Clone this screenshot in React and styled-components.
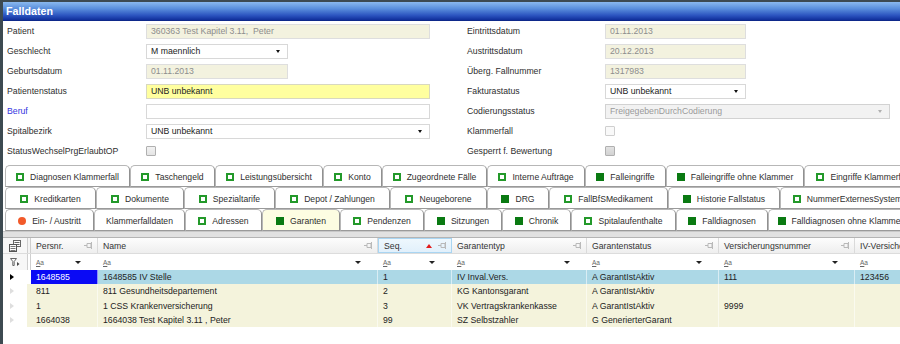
import React from 'react';
import styled, { createGlobalStyle, css } from 'styled-components';

const GlobalStyle = createGlobalStyle`
	body {
		margin: 0;
		background: #fff;
		font-family: "Liberation Sans", Arial, sans-serif;
		font-size: 8.7px;
		color: #2b2b2b;
	}
`;

const leftRows = [
	{ label: 'Patient', kind: 'readonly', w: 284, value: '360363 Test Kapitel 3.11,  Peter' },
	{ label: 'Geschlecht', kind: 'select', w: 142, value: 'M maennlich' },
	{ label: 'Geburtsdatum', kind: 'readonly', w: 142, value: '01.11.2013' },
	{ label: 'Patientenstatus', kind: 'yellow', w: 284, value: 'UNB unbekannt' },
	{ label: 'Beruf', kind: 'edit', w: 284, value: '', link: true },
	{ label: 'Spitalbezirk', kind: 'select', w: 284, value: 'UNB unbekannt' },
	{ label: 'StatusWechselPrgErlaubtOP', kind: 'check', tone: 'mid' },
];

const rightRows = [
	{ label: 'Eintrittsdatum', kind: 'readonly', w: 141, value: '01.11.2013' },
	{ label: 'Austrittsdatum', kind: 'readonly', w: 141, value: '20.12.2013' },
	{ label: 'Überg. Fallnummer', kind: 'readonly', w: 141, value: '1317983' },
	{ label: 'Fakturastatus', kind: 'select', w: 141, value: 'UNB unbekannt' },
	{ label: 'Codierungsstatus', kind: 'disabled', w: 285, value: 'FreigegebenDurchCodierung' },
	{ label: 'Klammerfall', kind: 'check', tone: 'light' },
	{ label: 'Gesperrt f. Bewertung', kind: 'check', tone: 'dark' },
];

const tabRows = [
	[
		['Diagnosen Klammerfall', 'empty', 125],
		['Taschengeld', 'empty', 85],
		['Leistungsübersicht', 'empty', 108],
		['Konto', 'empty', 59],
		['Zugeordnete Fälle', 'empty', 105],
		['Interne Aufträge', 'empty', 98],
		['Falleingriffe', 'full', 81],
		['Falleingriffe ohne Klammer', 'full', 138],
		['Eingriffe Klammerfall', 'empty', 118],
	],
	[
		['Kreditkarten', 'empty', 91],
		['Dokumente', 'empty', 88],
		['Spezialtarife', 'empty', 91],
		['Depot / Zahlungen', 'empty', 115],
		['Neugeborene', 'empty', 97],
		['DRG', 'full', 62],
		['FallBfSMedikament', 'empty', 119],
		['Historie Fallstatus', 'full', 112],
		['NummerExternesSystem', 'empty', 135],
	],
	[
		['Ein- / Austritt', 'dot', 89],
		['Klammerfalldaten', null, 91],
		['Adressen', 'empty', 77],
		['Garanten', 'full', 78, true],
		['Pendenzen', 'empty', 84],
		['Sitzungen', 'full', 78],
		['Chronik', 'full', 69],
		['Spitalaufenthalte', 'empty', 105],
		['Falldiagnosen', 'full', 92],
		['Falldiagnosen ohne Klammer', 'full', 145],
	],
];

const columns = [
	{ title: 'Persnr.', drop: true },
	{ title: 'Name', drop: true },
	{ title: 'Seq.', drop: true, sorted: true },
	{ title: 'Garantentyp', drop: true },
	{ title: 'Garantenstatus', drop: true },
	{ title: 'Versicherungsnummer', drop: true },
	{ title: 'IV-Versicherungsnummer', drop: false },
];

const rows = [
	['1648585', '1648585 IV Stelle', '1', 'IV Inval.Vers.', 'A GarantIstAktiv', '111', '123456'],
	['811', '811 Gesundheitsdepartement', '2', 'KG Kantonsgarant', 'A GarantIstAktiv', '', ''],
	['1', '1 CSS Krankenversicherung', '3', 'VK Vertragskrankenkasse', 'A GarantIstAktiv', '9999', ''],
	['1664038', '1664038 Test Kapitel 3.11 , Peter', '99', 'SZ Selbstzahler', 'G GenerierterGarant', '', ''],
];

const renderField = (f) => {
	if (f.kind === 'check') return <Check $tone={f.tone} />;
	if (f.kind === 'select' || f.kind === 'disabled')
		return (
			<Select $w={f.w} $kind={f.kind}>
				{f.value}
			</Select>
		);
	return (
		<Input $w={f.w} $kind={f.kind}>
			{f.value}
		</Input>
	);
};

const Pin = () => (
	<svg width="9" height="7" viewBox="0 0 9 7">
		<path d="M0 3.5h3M3 1.5h4v4H3zM7.5 0v7" stroke="#b9b9b9" fill="none" strokeWidth="1" />
	</svg>
);

const ChooserIcon = () => (
	<svg width="12" height="12" viewBox="0 0 12 12">
		<rect x="4.5" y="0.5" width="7" height="6" fill="#fff" stroke="#666" />
		<path d="M5.5 2.5h5M5.5 4.5h5" stroke="#666" />
		<rect x="0.5" y="4.5" width="7" height="7" fill="#fff" stroke="#555" />
		<path d="M1.5 6.5h5M1.5 8.5h5M1.5 10.5h5" stroke="#777" />
	</svg>
);

const FilterIcon = () => (
	<svg width="10" height="8" viewBox="0 0 10 8">
		<path d="M0.5 0.5h6l-2.3 3v4h-1.4v-4z" fill="none" stroke="#666" />
		<path d="M7 4l2.5 2L7 8z" fill="#444" />
	</svg>
);

const App = () => {
	return (
		<>
			<GlobalStyle />
			<Frame>
				<TitleBar>Falldaten</TitleBar>

				<Form>
					{leftRows.map((l, i) => (
						<React.Fragment key={l.label}>
							<Label $link={l.link}>{l.label}</Label>
							<Cell>{renderField(l)}</Cell>
							<Label>{rightRows[i].label}</Label>
							<Cell>{renderField(rightRows[i])}</Cell>
						</React.Fragment>
					))}
				</Form>

				<Tabs>
					{tabRows.map((row, r) => (
						<TabRow key={r}>
							{row.map(([text, mark, w, active]) => (
								<Tab key={text} $w={w} $active={active}>
									{mark && <TabMark $kind={mark} />}
									<span>{text}</span>
								</Tab>
							))}
						</TabRow>
					))}
				</Tabs>
				<PanelBar />

				<Grid>
					<HeaderRow>
						<Corner>
							<ChooserIcon />
						</Corner>
						<Divider />
						{columns.map((c) => (
							<HeadCell key={c.title} $sorted={c.sorted}>
								<span>{c.title}</span>
								<HeadTools>
									{c.sorted && <SortUp />}
									<Pin />
								</HeadTools>
							</HeadCell>
						))}
					</HeaderRow>

					<FilterRow>
						<Corner>
							<FilterIcon />
						</Corner>
						<Divider $plain />
						{columns.map((c) => (
							<FilterCell key={c.title}>
								<CaseIcon>
									<u>A</u>a
								</CaseIcon>
								{c.drop && <DropArrow />}
							</FilterCell>
						))}
					</FilterRow>

					{rows.map((r, i) => (
						<DataRow key={i} $selected={i === 0}>
							<Indicator>
								<RowArrow $current={i === 0} />
							</Indicator>
							<Spacer $selected={i === 0} />
							{r.map((v, j) => (
								<DataCell key={j} $focus={i === 0 && j === 0}>
									{v}
								</DataCell>
							))}
						</DataRow>
					))}
				</Grid>
			</Frame>
		</>
	);
};

export default App;

const Frame = styled.div`
	box-sizing: border-box;
	width: 900px;
	height: 344px;
	overflow: hidden;
	border-left: 3px solid #3d4a51;
	border-top: 2px solid #3d4a51;
	background: #fff;
`;

const TitleBar = styled.div`
	height: 19px;
	padding-left: 3px;
	line-height: 18px;
	font-size: 10.7px;
	font-weight: bold;
	color: #fff;
	background: linear-gradient(#8ab9ee 0%, #5a8fdc 35%, #2c55c0 70%, #13339f 92%, #0b2380 100%);
`;

const Form = styled.div`
	display: grid;
	grid-template-columns: 139px 321px 138px 1fr;
	grid-auto-rows: 20px;
	align-items: center;
	padding-left: 4px;
`;

const Label = styled.div`
	color: ${(p) => (p.$link ? '#3434e0' : '#2e2e2e')};
	white-space: nowrap;
`;

const Cell = styled.div`
	display: flex;
	align-items: center;
`;

const kinds = {
	readonly: { bg: '#f3f2df', color: '#8d8d8d', border: '#dedede' },
	edit: { bg: '#fff', color: '#222', border: '#d8d8d8' },
	yellow: { bg: '#ffff9f', color: '#222', border: '#d8d8c0' },
	select: { bg: '#fff', color: '#222', border: '#d8d8d8' },
	disabled: { bg: '#f2f2f2', color: '#9a9a9a', border: '#d2d2d2' },
};

const Input = styled.div`
	box-sizing: border-box;
	position: relative;
	width: ${(p) => p.$w}px;
	height: 15px;
	padding: 0 4px;
	line-height: 13px;
	white-space: pre;
	overflow: hidden;
	border: 1px solid ${(p) => kinds[p.$kind].border};
	background: ${(p) => kinds[p.$kind].bg};
	color: ${(p) => kinds[p.$kind].color};
`;

const Select = styled(Input)`
	&::after {
		content: '';
		position: absolute;
		right: 7px;
		top: 5px;
		border-left: 2.5px solid transparent;
		border-right: 2.5px solid transparent;
		border-top: 3px solid ${(p) => (p.$kind === 'disabled' ? '#b0b0b0' : '#111')};
	}
`;

const Check = styled.div`
	box-sizing: border-box;
	width: 10px;
	height: 10px;
	border: 1px solid ${(p) => (p.$tone === 'light' ? '#cfcfcf' : '#b0b0b0')};
	background: ${(p) =>
		p.$tone === 'light'
			? '#f9f9f9'
			: p.$tone === 'dark'
				? 'linear-gradient(#e2e2e2, #d2d2d2)'
				: 'linear-gradient(#f2f2f2, #e4e4e4)'};
	border-radius: 1px;
`;

const Tabs = styled.div`
	margin-top: 4px;
	padding-left: 2px;
`;

const TabRow = styled.div`
	display: flex;
	height: 22px;
	overflow: hidden;
`;

const Tab = styled.div`
	flex: 0 0 ${(p) => p.$w}px;
	box-sizing: border-box;
	display: flex;
	align-items: center;
	justify-content: center;
	gap: 6px;
	height: 22px;
	padding-top: 1px;
	border: 1px solid #b7b7b7;
	border-right-color: #909090;
	border-bottom-color: #9a9a9a;
	border-radius: 5px 5px 0 0;
	background: ${(p) => (p.$active ? '#fdfde2' : '#fff')};
	color: #2e2e2e;
	font-size: 8.6px;
	white-space: nowrap;
`;

const TabMark = styled.span`
	flex: none;
	box-sizing: border-box;
	width: 8px;
	height: 8px;
	${(p) =>
		p.$kind === 'empty' &&
		css`
			border: 2px solid #23992a;
		`}
	${(p) =>
		p.$kind === 'full' &&
		css`
			background: #0a7a12;
		`}
	${(p) =>
		p.$kind === 'dot' &&
		css`
			background: #f25a2a;
			border-radius: 50%;
		`}
`;

const PanelBar = styled.div`
	box-sizing: border-box;
	height: 7px;
	background: #e1e1e1;
	border-top: 1px solid #c8c8c8;
	border-bottom: 1px solid #b4b4b4;
`;

const cols = '24px 4px 67px 280px 74px 135px 132px 136px 120px';

const Grid = styled.div`
	overflow: hidden;
`;

const HeaderRow = styled.div`
	display: grid;
	grid-template-columns: ${cols};
	height: 16px;
	border-bottom: 1px solid #dcdcdc;
	box-sizing: border-box;
	background: linear-gradient(#fdfdfd, #eeeeee);
`;

const Corner = styled.div`
	display: flex;
	align-items: center;
	justify-content: center;
	background: #f7f7f7;
`;

const Divider = styled.div`
	box-sizing: border-box;
	border-left: 1px solid #cfcfcf;
	border-right: 1px solid #cfcfcf;
	background: ${(p) => (p.$plain ? '#fff' : '#f4f4f4')};
`;

const HeadCell = styled.div`
	box-sizing: border-box;
	display: flex;
	align-items: center;
	justify-content: space-between;
	padding: 0 4px 0 5px;
	white-space: nowrap;
	overflow: hidden;
	color: #333;
	border-right: 1px solid #dadada;
	${(p) =>
		p.$sorted &&
		css`
			background: linear-gradient(#eef7fd, #e1f0fb);
			border: 1px solid #a9d5f2;
		`}
`;

const HeadTools = styled.div`
	display: flex;
	align-items: center;
	gap: 6px;
`;

const SortUp = styled.span`
	border-left: 3px solid transparent;
	border-right: 3px solid transparent;
	border-bottom: 4px solid #e21b1b;
`;

const FilterRow = styled.div`
	display: grid;
	grid-template-columns: ${cols};
	height: 16px;
	background: #fff;
`;

const FilterCell = styled.div`
	display: flex;
	align-items: center;
	justify-content: space-between;
	padding: 0 17px 0 5px;
`;

const CaseIcon = styled.span`
	font-size: 6.5px;
	color: #666;
	u {
		text-decoration: underline;
	}
`;

const DropArrow = styled.span`
	border-left: 3px solid transparent;
	border-right: 3px solid transparent;
	border-top: 3px solid #222;
`;

const DataRow = styled.div`
	display: grid;
	grid-template-columns: ${cols};
	height: 14.25px;
	line-height: 14.25px;
	background: ${(p) => (p.$selected ? '#acd8e6' : '#f4f3dc')};
`;

const Indicator = styled.div`
	display: flex;
	align-items: center;
	padding-left: 7px;
	background: #fff;
`;

const RowArrow = styled.span`
	border-top: 3px solid transparent;
	border-bottom: 3px solid transparent;
	border-left: 4px solid ${(p) => (p.$current ? '#000' : '#dedede')};
`;

const Spacer = styled.div`
	background: ${(p) => (p.$selected ? '#fff' : 'transparent')};
`;

const DataCell = styled.div`
	padding-left: 5px;
	white-space: nowrap;
	overflow: hidden;
	color: ${(p) => (p.$focus ? '#fff' : '#222')};
	background: ${(p) => (p.$focus ? '#0a0af5' : 'transparent')};
	border-right: 1px solid rgba(255, 255, 255, 0.55);
`;
